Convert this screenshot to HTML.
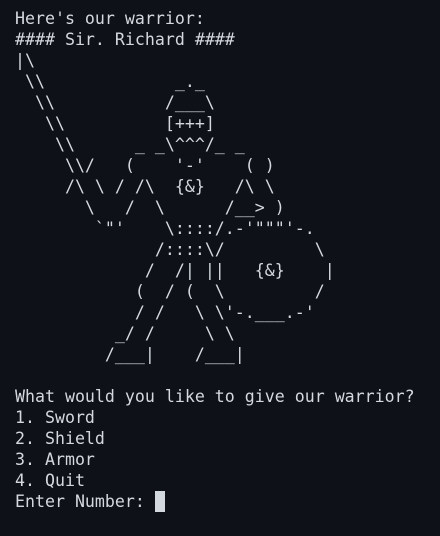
<!DOCTYPE html>
<html><head><meta charset="utf-8"><style>
html,body{margin:0;padding:0;background:#0e1117;width:440px;height:536px;overflow:hidden}
pre{margin:0;padding:7.5px 0 0 15px;font-family:"DejaVu Sans Mono","Liberation Mono",monospace;font-size:16.6px;line-height:21px;color:#d4d8df;white-space:pre}
.c{display:inline-block;width:10px;height:21px;background:#d4d8df;vertical-align:top}
</style></head><body><pre>Here's our warrior:
#### Sir. Richard ####
|\
 \\             _._
  \\           /___\
   \\          [+++]
    \\      _ _\^^^/_ _
     \\/   (    '-'    ( )
     /\ \ / /\  {&}   /\ \
       \   /  \      /__> )
        `"'    \::::/.-'"""'-.
              /::::\/         \
             /  /| ||   {&}    |
            (  / (  \         /
            / /   \ \'-.___.-'
          _/ /     \ \
         /___|    /___|

What would you like to give our warrior?
1. Sword
2. Shield
3. Armor
4. Quit
Enter Number: <span class="c"></span></pre></body></html>
